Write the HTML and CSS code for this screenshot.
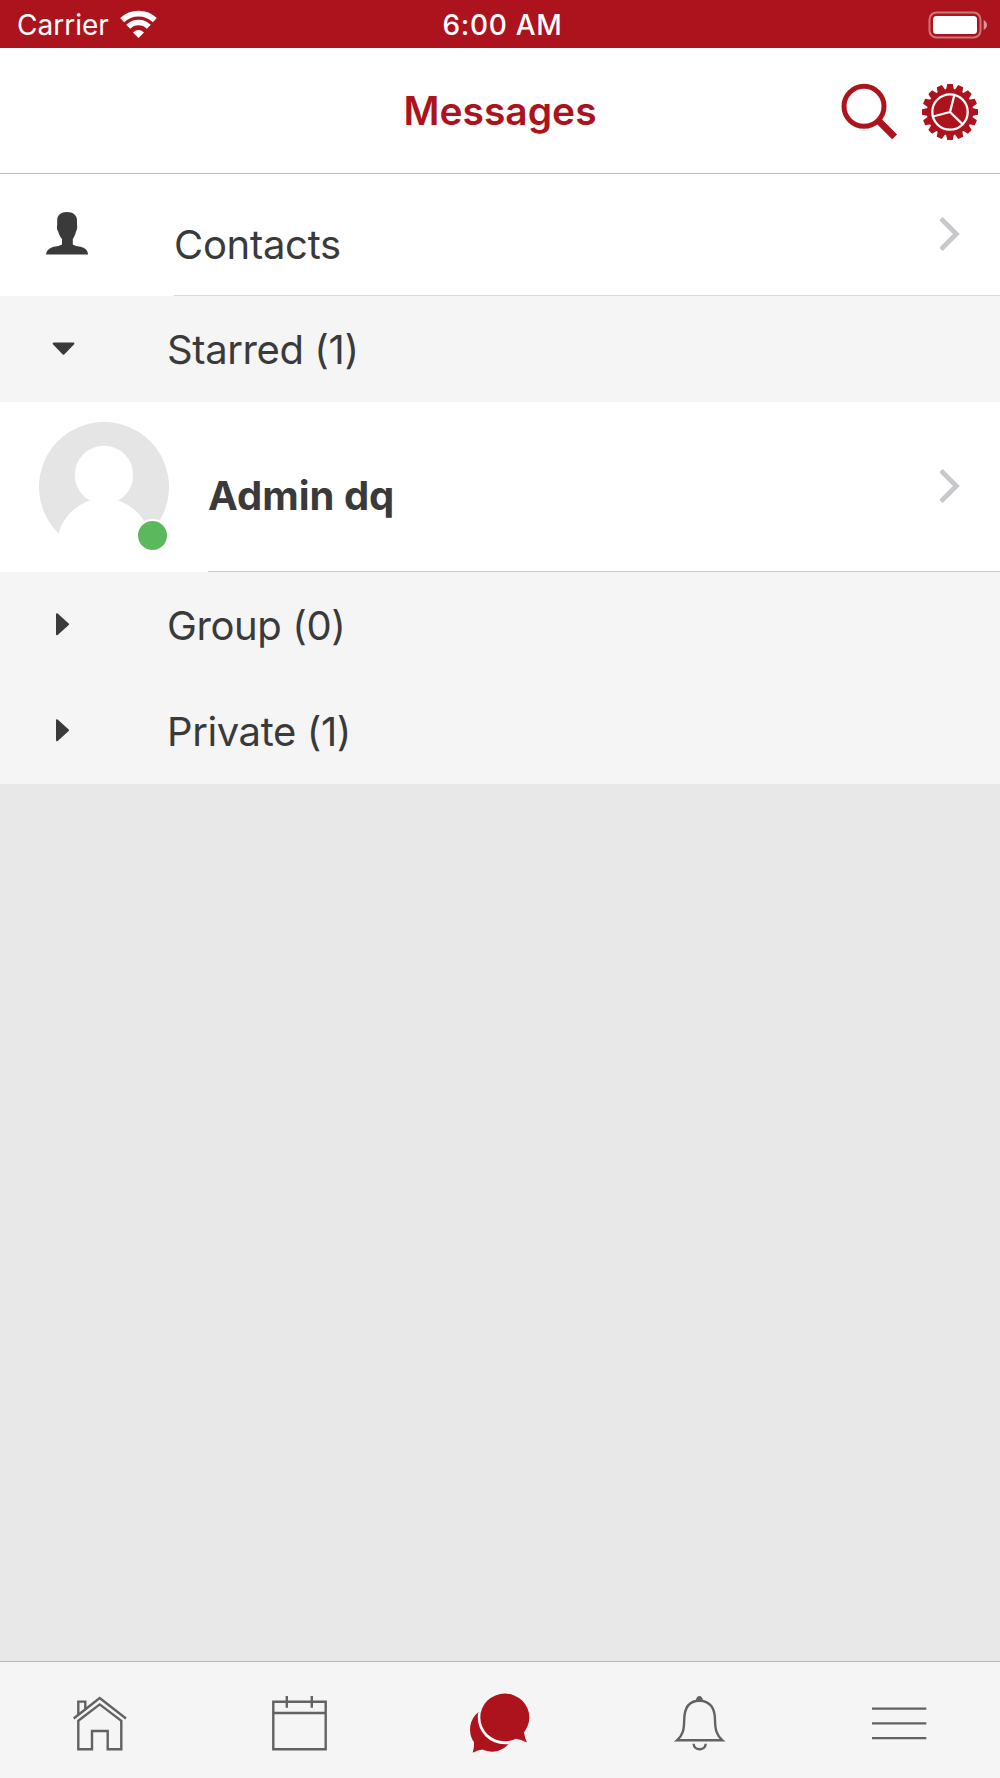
FILE: index.html
```html
<!DOCTYPE html>
<html lang="en">
<head>
  <meta charset="UTF-8" />
  <meta name="viewport" content="width=device-width, initial-scale=1.0" />
  <title>Messages</title>
  <link rel="stylesheet" href="styles.css">
</head>
<body>
  <div class="status-bar">
    <div class="carrier">
      <span>Carrier</span>
      <svg width="40" height="30" viewBox="0 0 40 30">
        <path d="M3.2 10.2 A23.5 23.5 0 0 1 35.8 10.2" fill="none" stroke="#fff" stroke-width="5.8" />
        <path d="M9.2 16.8 A14.5 14.5 0 0 1 29.8 16.8" fill="none" stroke="#fff" stroke-width="5.6" />
        <path d="M14 22.4 Q19.5 17.8 25 22.4 L19.5 28 Z" fill="#fff" />
      </svg>
    </div>
    <span class="time">6:00 AM</span>
    <svg class="battery" width="60" height="28" viewBox="0 0 60 28">
      <rect x="1.5" y="1.5" width="51" height="25" rx="7" fill="none" stroke="#fff" stroke-opacity=".42" stroke-width="2" />
      <rect x="5" y="5" width="44" height="18" rx="3.5" fill="#fff" />
      <path d="M55.7 9 Q59 11 59 14 Q59 17 55.7 19 Z" fill="#fff" fill-opacity=".55" />
    </svg>
  </div>

  <div class="nav-bar">
    <h1>Messages</h1>
    <div class="nav-actions">
      <svg width="60" height="60" viewBox="0 0 60 60" fill="none" stroke="#ad131c">
        <circle cx="25" cy="24.3" r="20" stroke-width="5" />
        <path d="M39.4 38.6 L55.6 54.9" stroke-width="7" />
      </svg>
      <svg width="60" height="60" viewBox="-30 -30 60 60">
        <defs>
          <path id="teeth" d="M-2.7 -28 H2.7 L4.1 -22 V22 L2.7 28 H-2.7 L-4.1 22 V-22 Z" />
        </defs>
        <g fill="#ad131c">
          <circle r="23.2" />
          <use href="#teeth" />
          <use href="#teeth" transform="rotate(22.5)" />
          <use href="#teeth" transform="rotate(45)" />
          <use href="#teeth" transform="rotate(67.5)" />
          <use href="#teeth" transform="rotate(90)" />
          <use href="#teeth" transform="rotate(112.5)" />
          <use href="#teeth" transform="rotate(135)" />
          <use href="#teeth" transform="rotate(157.5)" />
        </g>
        <g fill="none" stroke="#fff" stroke-width="2.3">
          <circle r="17.7" />
          <path d="M0 0 L4.4 -17 M0 0 L-17 4.5 M0 0 L12.8 12.3" />
        </g>
      </svg>
    </div>
  </div>

  <div class="contacts-row">
    <svg class="person" width="44" height="44" viewBox="0 0 44 44">
      <path d="M22 1 C28 1 32 4 32 9.5 V14 C32.6 16 32 19 31 20.5 C30.4 24 29 26 27.8 28 V33.5 C30 35.4 35 35 38.5 36.8 C41.5 38.5 43 40.5 43 43.5 H1 C1.5 40.5 3 38.3 6 36.8 C9.5 35.2 14.5 35.4 17 33.5 V28 C15 25.5 13.8 23 13.2 20.5 C12 19 11.6 16 12.2 14 V9.5 C12.2 4 16 1 22 1 Z" fill="#3a3a3a" />
    </svg>
    <div class="row-body">
      <span>Contacts</span>
      <svg class="chevron" width="20" height="36" viewBox="0 0 20 36"><path d="M1 2.6 L16.4 18 L1 33.4" /></svg>
    </div>
  </div>

  <div class="section">
    <svg width="24" height="24" viewBox="0 0 24 24"><path d="M2.6 6.6 H22.4 L12.5 16.8 Z" /></svg>
    <span>Starred (1)</span>
  </div>

  <div class="chat-row">
    <div class="avatar">
      <svg width="130" height="130" viewBox="0 0 130 130">
        <circle cx="65" cy="65" r="65" fill="#e5e5e5" />
        <circle cx="65" cy="53" r="29.2" fill="#fff" />
        <circle cx="65" cy="123.5" r="47" fill="#fff" />
      </svg>
      <span class="online"></span>
    </div>
    <div class="row-body">
      <span class="name">Admin dq</span>
      <svg class="chevron" width="20" height="36" viewBox="0 0 20 36"><path d="M1 2.6 L16.4 18 L1 33.4" /></svg>
    </div>
  </div>

  <div class="section">
    <svg width="24" height="24" viewBox="0 0 24 24"><path d="M6 1.2 V21.2 L17 11.2 Z" /></svg>
    <span>Group (0)</span>
  </div>
  <div class="section">
    <svg width="24" height="24" viewBox="0 0 24 24"><path d="M6 1.2 V21.2 L17 11.2 Z" /></svg>
    <span>Private (1)</span>
  </div>

  <div class="tab-bar">
    <div class="tab">
      <svg width="80" height="80" viewBox="0 0 80 80">
        <path d="M13.7 38.5 L39.7 18 L66 38.5" />
        <path d="M18.3 34.5 V21.6 H25.3 V28.8" />
        <path d="M18.3 40.8 L39.7 24.4 L61.3 40.8 V69.3 H47.7 V51 H32 V69.3 H18.3 Z" />
      </svg>
    </div>
    <div class="tab">
      <svg width="80" height="80" viewBox="0 0 80 80">
        <path d="M13.3 21.7 H65.7 V69.3 H13.3 Z M13.3 33 H65.7 M26.8 16 V27.7 M51.8 16 V27.7" />
      </svg>
    </div>
    <div class="tab active">
      <svg width="80" height="80" viewBox="0 0 80 80">
        <defs>
          <path id="back-bubble" d="M14 62.3 A22.3 22.3 0 0 1 18.5 32 L50 62.3 A22.3 22.3 0 0 1 22.3 69.6 Q18 70.2 12.7 72.8 Q14.5 67 14 62.3 Z" />
          <clipPath id="back-clip"><use href="#back-bubble" /></clipPath>
        </defs>
        <use href="#back-bubble" />
        <circle class="gap" cx="44.8" cy="37.3" r="27" clip-path="url(#back-clip)" />
        <ellipse cx="44.8" cy="37.4" rx="24.5" ry="23.8" />
        <path d="M65.5 49 Q63.4 51.5 64.3 54 Q65 58.5 67 62.4 Q61 59.5 55.5 58.8 Z" />
      </svg>
    </div>
    <div class="tab">
      <svg width="80" height="80" viewBox="0 0 80 80">
        <path d="M17 60.3 C23 55 24 50 24.2 40 C24.3 28 29 20.7 39.4 20.7 C49.8 20.7 55 28 55 40 C55.2 50 56.5 55 62.4 60.3 Z" />
        <path d="M33.6 63.8 C33.8 71 45.5 71 45.7 63.8" />
        <path class="knob" d="M36 20.6 C35.8 14.6 43 14.6 42.8 20.6 Z" />
      </svg>
    </div>
    <div class="tab">
      <svg width="80" height="80" viewBox="0 0 80 80">
        <path d="M12 28.6 H66.3 M12 43.4 H66.3 M12 58.1 H66.3" />
      </svg>
    </div>
  </div>
</body>
</html>
```
FILE: styles.css
```css
* {
  box-sizing: border-box;
}
body {
  margin: 0;
  height: 1778px;
  display: flex;
  flex-direction: column;
  font-family: Inter, "Liberation Sans", sans-serif;
  font-size: 40px;
  color: #3a3a3a;
  background-color: #e8e8e8;
}
svg {
  display: block;
  flex: none;
}
.status-bar {
  display: grid;
  grid-template-columns: 1fr auto 1fr;
  align-items: center;
  height: 48px;
  padding: 2px 12px 0 17px;
  background-color: #ad131c;
  color: #fff;
  font-size: 28px;
}
.carrier {
  display: flex;
  align-items: center;
  gap: 10px;
}
.time {
  font-weight: 500;
  letter-spacing: 0.7px;
}
.battery {
  justify-self: end;
  margin-top: -1px;
}
.nav-bar {
  display: grid;
  grid-template-columns: 1fr auto 1fr;
  align-items: center;
  height: 126px;
  padding-right: 20px;
  padding-left: 20px;
  background-color: #fff;
  border-bottom: 1px solid #bcbcbe;
}
.nav-bar h1 {
  grid-column: 2;
  margin: 0;
  font-size: 39px;
  font-weight: 600;
  color: #ad131c;
}
.nav-actions {
  display: flex;
  justify-content: flex-end;
  gap: 21px;
  padding-top: 3px;
}
.contacts-row {
  display: flex;
  height: 122px;
  padding-left: 45px;
  background-color: #fff;
}
.person {
  margin-top: 37px;
}
.row-body {
  flex: 1;
  display: flex;
  align-items: center;
  justify-content: space-between;
  padding-right: 40px;
}
.contacts-row .row-body {
  margin-left: 85px;
  border-bottom: 1px solid #d9d9da;
}
.contacts-row span {
  padding-top: 20px;
  letter-spacing: -0.3px;
}
.chevron {
  margin-bottom: 2px;
  fill: none;
  stroke: #c7c7cc;
  stroke-width: 4.8;
}
.section {
  display: flex;
  align-items: center;
  gap: 92px;
  height: 106px;
  padding-left: 51px;
  background-color: #f5f5f5;
  letter-spacing: -0.4px;
}
.section svg {
  fill: #3a3a3a;
  stroke: #3a3a3a;
  stroke-width: 2;
  stroke-linejoin: round;
}
.chat-row {
  display: flex;
  height: 170px;
  padding-left: 39px;
  background-color: #fff;
}
.avatar {
  position: relative;
  width: 130px;
  height: 130px;
  margin-top: 20px;
}
.online {
  position: absolute;
  right: 0;
  bottom: 0;
  width: 33px;
  height: 33px;
  border: 2px solid #fff;
  border-radius: 50%;
  background-color: #5cb85c;
}
.chat-row .row-body {
  margin-left: 39px;
  border-bottom: 1px solid #c8c8ca;
}
.name {
  padding-top: 18px;
  font-weight: 700;
}
.tab-bar {
  display: flex;
  align-items: center;
  height: 117px;
  margin-top: auto;
  background-color: #f5f5f5;
  border-top: 1px solid #b8b8b8;
}
.tab {
  flex: 1;
  display: flex;
  justify-content: center;
}
.tab svg {
  fill: none;
  stroke: #626262;
  stroke-width: 2.4;
}
.tab.active svg {
  fill: #ad131c;
  stroke: none;
}
.tab.active .gap {
  fill: #fff;
}
.tab .knob {
  fill: #626262;
  stroke: none;
}
```
